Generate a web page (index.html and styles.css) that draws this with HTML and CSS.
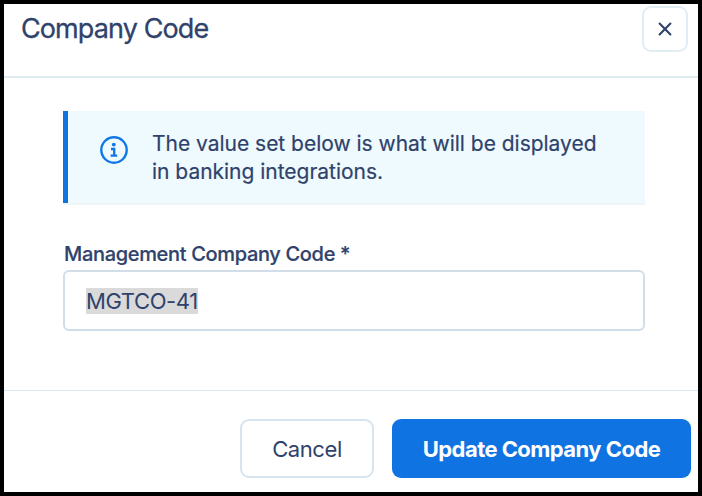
FILE: index.html
```html
<!DOCTYPE html>
<html lang="en">
<head>
  <meta charset="UTF-8">
  <title>Company Code</title>
  <meta name="viewport" content="width=device-width, initial-scale=1.0">
  <link rel="stylesheet" href="styles.css">
</head>
<body>
  <div class="modal">
    <div class="modal-header">
      <h1 class="title">Company Code</h1>
      <button class="close-btn" type="button" aria-label="Close">
        <svg width="14" height="14" viewBox="0 0 14 14" fill="none" stroke="currentColor" stroke-width="2.1" stroke-linecap="round">
          <path d="M1.6 1.6l10.8 10.8M12.4 1.6l-10.8 10.8"/>
        </svg>
      </button>
    </div>

    <div class="modal-body">
      <div class="alert">
        <svg class="alert-icon" width="28" height="28" viewBox="0 0 28 28" fill="none" stroke="currentColor">
          <circle cx="14" cy="14" r="12.7" stroke-width="2.4"/>
          <circle cx="13.8" cy="8.6" r="1.9" fill="currentColor" stroke="none"/>
          <path d="M11 13h3.2v7M10.6 19.6h6.6" stroke-width="2.3"/>
        </svg>
        <p class="alert-text">The value set below is what will be displayed<br>in banking integrations.</p>
      </div>

      <label class="field-label" for="codeInput">Management Company Code *</label>
      <div class="field" id="codeInput"><span class="selected">MGTCO-41</span></div>
    </div>

    <div class="modal-footer">
      <button class="btn cancel-btn" type="button">Cancel</button>
      <button class="btn update-btn" type="button">Update Company Code</button>
    </div>
  </div>
</body>
</html>
```

FILE: styles.css
```css
* {
  box-sizing: border-box;
}

body {
  margin: 0;
  font-family: Inter, "Liberation Sans", sans-serif;
  color: #2f426b;
}

.modal {
  display: flex;
  flex-direction: column;
  height: 496px;
  border: 4px solid #000;
  background-color: #fff;
  overflow: hidden;
}

/* header */
.modal-header {
  display: flex;
  justify-content: space-between;
  align-items: flex-start;
  height: 74px;
  padding: 2px 10px 0 17px;
  border-bottom: 2px solid #e0ebf1;
}

.title {
  margin: 5px 0 0;
  font-size: 27px;
  line-height: 36px;
  font-weight: 400;
  letter-spacing: -0.9px;
  -webkit-text-stroke: 0.3px currentColor;
}

.close-btn {
  display: flex;
  align-items: center;
  justify-content: center;
  width: 46px;
  height: 46px;
  padding: 0;
  border: 2px solid #e2edf3;
  border-radius: 9px;
  background-color: #fff;
  color: #2f426b;
}

/* body */
.modal-body {
  flex: 1;
  padding: 33px 53px 0 59px;
}

.alert {
  display: flex;
  height: 92px;
  padding: 19px 0 0 32px;
  border-left: 5px solid #0f73e0;
  background-color: #effaff;
  box-shadow: 0 2px 0 #f0f5f7;
}

.alert-icon {
  flex: none;
  margin: 6px 24px 0 0;
  color: #0f78e6;
}

.alert-text {
  margin: 0;
  font-size: 21px;
  line-height: 28px;
  letter-spacing: -0.02px;
  white-space: nowrap;
  -webkit-text-stroke: 0.2px currentColor;
}

.field-label {
  display: block;
  margin: 38px 0 0 1px;
  height: 29px;
  font-size: 20px;
  line-height: 26px;
  font-weight: 500;
  letter-spacing: -0.33px;
  -webkit-text-stroke: 0.2px currentColor;
}

.field {
  display: flex;
  align-items: center;
  height: 61px;
  padding-left: 21px;
  border: 2px solid #d1deea;
  border-radius: 6px;
}

.selected {
  height: 26px;
  font-size: 22px;
  line-height: 26px;
  letter-spacing: -0.4px;
  background-color: #dadada;
}

/* footer */
.modal-footer {
  display: flex;
  justify-content: flex-end;
  gap: 18px;
  height: 102px;
  padding: 28px 7px 0 0;
  border-top: 1px solid #dbe8f2;
}

.btn {
  height: 59px;
  padding: 0;
  border-radius: 9px;
  font-family: inherit;
  font-size: 22px;
  white-space: nowrap;
}

.cancel-btn {
  width: 134px;
  border: 2px solid #d8e4ed;
  background-color: #fff;
  color: #2f426b;
  letter-spacing: -0.4px;
}

.update-btn {
  width: 299px;
  border: none;
  background-color: #0f73e2;
  color: #fff;
  font-weight: 700;
  letter-spacing: -0.55px;
}
```
